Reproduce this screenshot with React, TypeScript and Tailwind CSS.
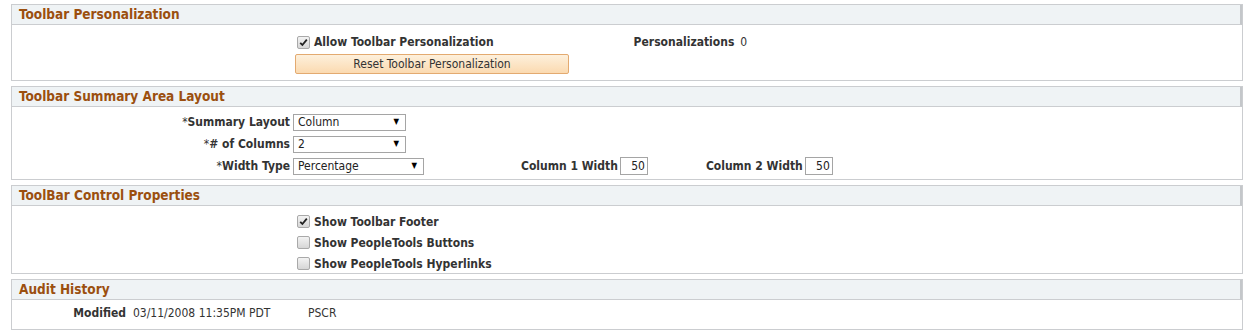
import React from "react";

const font = { fontFamily: '"DejaVu Sans Condensed", "DejaVu Sans", sans-serif' };

function Panel({ title, children, bodyClass }: { title: string; children: React.ReactNode; bodyClass: string }) {
  return (
    <div className="border border-[#cbcdd0] bg-white">
      <div className="h-[20px] bg-[#eff3f5] border-b border-[#cbcdd0] border-r-2 border-r-[#c4c7ca] px-[7px] flex items-center">
        <span className="text-[13.5px] font-bold text-[#9b4f0f] leading-none">{title}</span>
      </div>
      <div className={bodyClass}>{children}</div>
    </div>
  );
}

function Check({ checked }: { checked?: boolean }) {
  return (
    <span className="w-[13px] h-[13px] rounded-[2px] border border-[#a9a9a9] bg-gradient-to-b from-[#f3f3f3] to-[#d6d6d6] flex items-center justify-center shrink-0">
      {checked && (
        <svg width="9" height="9" viewBox="0 0 9 9">
          <path d="M1.2 4.8 L3.4 7 L7.8 1.6" fill="none" stroke="#222" strokeWidth="1.8" />
        </svg>
      )}
    </span>
  );
}

function CheckRow({ label, checked, h }: { label: string; checked?: boolean; h: string }) {
  return (
    <div className={`flex items-center gap-[4px] ${h} pl-[285px]`}>
      <Check checked={checked} />
      <span className="text-[12px] font-bold text-[#333]">{label}</span>
    </div>
  );
}

function Select({ value, w }: { value: string; w: string }) {
  return (
    <div className={`${w} h-[17px] border border-[#a5a5a5] bg-white flex items-center justify-between pl-[4px] pr-[6px]`}>
      <span className="text-[12px] text-[#222]">{value}</span>
      <span className="text-[8px] text-black">▼</span>
    </div>
  );
}

function FieldRow({ label, children }: { label: string; children: React.ReactNode }) {
  return (
    <div className="flex items-center h-[22px]">
      <div className="w-[281px] text-right pr-[3px] text-[12px] font-bold text-[#333]">
        <span className="font-normal">*</span>
        {label}
      </div>
      {children}
    </div>
  );
}

function NumBox({ value }: { value: string }) {
  return (
    <div className="w-[28px] h-[18px] border border-[#a5a5a5] bg-white flex items-center justify-end pr-[2px] text-[12px] text-[#222]">
      {value}
    </div>
  );
}

export default function App() {
  return (
    <div className="w-[1254px] h-[336px] bg-white pt-[4px] pl-[11px] pr-[11px] flex flex-col gap-[5px]" style={font}>
      <Panel title="Toolbar Personalization" bodyClass="h-[55px] pt-[8px]">
        <div className="flex items-center">
          <CheckRow label="Allow Toolbar Personalization" checked h="h-[18px]" />
          <div className="ml-[140px] flex items-center gap-[6px] text-[12px] text-[#333]">
            <span className="font-bold">Personalizations</span>
            <span>0</span>
          </div>
        </div>
        <div className="pl-[283px]">
          <button className="w-[274px] h-[20px] rounded-[2px] border border-[#e3aa70] bg-gradient-to-b from-[#fdf0dc] to-[#fbdab0] text-[12px] text-[#333]">
            Reset Toolbar Personalization
          </button>
        </div>
      </Panel>

      <Panel title="Toolbar Summary Area Layout" bodyClass="h-[72px] pt-[4px]">
        <FieldRow label="Summary Layout">
          <Select value="Column" w="w-[113px]" />
        </FieldRow>
        <FieldRow label="# of Columns">
          <Select value="2" w="w-[113px]" />
        </FieldRow>
        <FieldRow label="Width Type">
          <Select value="Percentage" w="w-[131px]" />
          <div className="ml-[97px] flex items-center gap-[2px]">
            <span className="text-[12px] font-bold text-[#333]">Column 1 Width</span>
            <NumBox value="50" />
          </div>
          <div className="ml-[58px] flex items-center gap-[2px]">
            <span className="text-[12px] font-bold text-[#333]">Column 2 Width</span>
            <NumBox value="50" />
          </div>
        </FieldRow>
      </Panel>

      <Panel title="ToolBar Control Properties" bodyClass="h-[67px] pt-[5px]">
        <CheckRow label="Show Toolbar Footer" checked h="h-[21px]" />
        <CheckRow label="Show PeopleTools Buttons" h="h-[21px]" />
        <CheckRow label="Show PeopleTools Hyperlinks" h="h-[21px]" />
      </Panel>

      <Panel title="Audit History" bodyClass="h-[29px] pt-[4px]">
        <div className="flex items-center text-[12px] text-[#333]">
          <span className="w-[114px] text-right font-bold">Modified</span>
          <span className="ml-[7px] w-[175px]">03/11/2008 11:35PM PDT</span>
          <span>PSCR</span>
        </div>
      </Panel>
    </div>
  );
}
